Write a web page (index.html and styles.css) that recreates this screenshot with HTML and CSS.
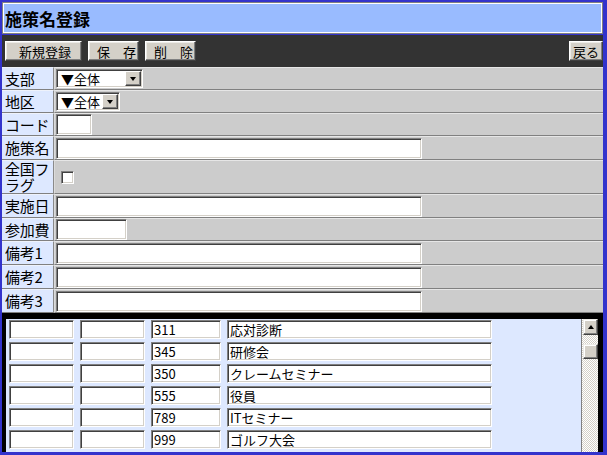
FILE: index.html
```html
<!DOCTYPE html>
<html lang="ja">
<head>
<meta charset="utf-8">
<title>施策名登録</title>
<link rel="stylesheet" href="styles.css">
</head>
<body>
<div class="page">
  <div class="title">施策名登録</div>
  <div class="toolbar">
    <button class="btn b-new">新規登録</button>
    <button class="btn b-save">保　存</button>
    <button class="btn b-del">削　除</button>
    <button class="btn b-back">戻る</button>
  </div>
  <div class="form">
    <div class="row sm">
      <div class="lbl">支部</div>
      <div class="val"><div class="ctl sel sel-wide"><span class="sel-text">▼全体</span><span class="sel-btn"><span class="tri-down"></span></span></div></div>
    </div>
    <div class="row sm">
      <div class="lbl">地区</div>
      <div class="val"><div class="ctl sel sel-narrow"><span class="sel-text">▼全体</span><span class="sel-btn"><span class="tri-down"></span></span></div></div>
    </div>
    <div class="row sm">
      <div class="lbl">コード</div>
      <div class="val"><input class="ctl txt w-code" type="text"></div>
    </div>
    <div class="row">
      <div class="lbl">施策名</div>
      <div class="val"><input class="ctl txt w-full" type="text"></div>
    </div>
    <div class="row tall">
      <div class="lbl">全国フラグ</div>
      <div class="val"><input class="ctl chk" type="checkbox"></div>
    </div>
    <div class="row">
      <div class="lbl">実施日</div>
      <div class="val"><input class="ctl txt w-full" type="text"></div>
    </div>
    <div class="row sm">
      <div class="lbl">参加費</div>
      <div class="val"><input class="ctl txt w-fee" type="text"></div>
    </div>
    <div class="row">
      <div class="lbl">備考1</div>
      <div class="val"><input class="ctl txt w-full" type="text"></div>
    </div>
    <div class="row">
      <div class="lbl">備考2</div>
      <div class="val"><input class="ctl txt w-full" type="text"></div>
    </div>
    <div class="row">
      <div class="lbl">備考3</div>
      <div class="val"><input class="ctl txt w-full" type="text"></div>
    </div>
  </div>
  <div class="list">
    <div class="list-body">
      <div class="lrow"><input class="ctl lc1" type="text"><input class="ctl lc2" type="text"><input class="ctl lc3" type="text" value="311"><input class="ctl lc4" type="text" value="応対診断"></div>
      <div class="lrow"><input class="ctl lc1" type="text"><input class="ctl lc2" type="text"><input class="ctl lc3" type="text" value="345"><input class="ctl lc4" type="text" value="研修会"></div>
      <div class="lrow"><input class="ctl lc1" type="text"><input class="ctl lc2" type="text"><input class="ctl lc3" type="text" value="350"><input class="ctl lc4" type="text" value="クレームセミナー"></div>
      <div class="lrow"><input class="ctl lc1" type="text"><input class="ctl lc2" type="text"><input class="ctl lc3" type="text" value="555"><input class="ctl lc4" type="text" value="役員"></div>
      <div class="lrow"><input class="ctl lc1" type="text"><input class="ctl lc2" type="text"><input class="ctl lc3" type="text" value="789"><input class="ctl lc4" type="text" value="ITセミナー"></div>
      <div class="lrow"><input class="ctl lc1" type="text"><input class="ctl lc2" type="text"><input class="ctl lc3" type="text" value="999"><input class="ctl lc4" type="text" value="ゴルフ大会"></div>
    </div>
    <div class="sb">
      <div class="sb-btn"><span class="tri-up"></span></div>
      <div class="sb-thumb"></div>
    </div>
  </div>
</div>
</body>
</html>
```

FILE: styles.css
```css
* { box-sizing: border-box; }

body {
  margin: 0;
  font-family: "Noto Sans CJK JP", "Liberation Sans", sans-serif;
  color: #000;
}

.page {
  width: 607px;
  height: 455px;
  background: #3333cc;
  padding: 2px 4px 3px 2px;
  display: flex;
  flex-direction: column;
  overflow: hidden;
}

.title {
  height: 32px;
  flex: none;
  background: #99bbff;
  border: 1px solid #808080;
  box-shadow: inset 0 0 0 1px #fff;
  font-size: 17px;
  font-weight: bold;
  padding-left: 2px;
  display: flex;
  align-items: center;
  margin-bottom: 1px;
}

.toolbar {
  height: 32px;
  flex: none;
  background: #333333;
  display: flex;
  align-items: flex-start;
  gap: 6px;
  padding: 6px 0 0 3px;
}

.btn {
  height: 20px;
  font-family: "Noto Sans CJK JP", sans-serif;
  font-size: 13px;
  line-height: 17px;
  color: #000;
  background: #d4d0c8;
  border: 1px solid;
  border-color: #fff #404040 #404040 #fff;
  box-shadow: inset -1px -1px 0 #808080, inset 1px 1px 0 #ecebe7;
  padding: 0;
  text-align: left;
  white-space: nowrap;
}
.b-new { width: 77px; padding-left: 13px; }
.b-save { width: 51px; padding-left: 8px; }
.b-del { width: 51px; padding-left: 8px; }
.b-back { width: 34px; margin-left: auto; text-align: center; }

.form {
  display: flex;
  flex-direction: column;
  flex: none;
}

.row {
  display: flex;
  height: 24px;
}
.row.sm { height: 23px; }
.row.tall { height: 34px; }

.lbl {
  width: 52px;
  flex: none;
  background: #dde8ff;
  border-top: 1px solid #eef2fb;
  border-bottom: 1px solid #808080;
  border-right: 1px solid #8a8a8a;
  font-size: 15px;
  line-height: 16px;
  padding-left: 3px;
  display: flex;
  align-items: center;
  letter-spacing: -0.3px;
}

.val {
  flex: 1;
  background: #cccccc;
  border-top: 1px solid #e6e6e6;
  border-bottom: 1px solid #808080;
  border-left: 1px solid #dcdcdc;
  display: flex;
  align-items: center;
  padding-left: 1px;
}

.ctl {
  background: #fff;
  border: 1px solid;
  border-color: #808080 #fff #fff #808080;
  box-shadow: inset 1px 1px 0 #404040, inset -1px -1px 0 #d4d0c8;
  font-family: "Noto Sans CJK JP", sans-serif;
  font-size: 13px;
  color: #000;
  padding: 0 2px;
  margin: 0;
  outline: none;
}

.txt { height: 21px; }
.w-full { width: 366px; }
.w-code { width: 36px; }
.w-fee { width: 71px; }

.sel {
  height: 19px;
  display: flex;
  align-items: center;
  padding: 0 1px 0 0;
}
.sel-wide { width: 87px; }
.sel-narrow { width: 64px; }
.sel-text {
  flex: 1;
  font-size: 13px;
  line-height: 15px;
  padding-left: 4px;
  white-space: nowrap;
}
.sel-btn {
  width: 16px;
  height: 15px;
  flex: none;
  background: #d4d0c8;
  border: 1px solid;
  border-color: #fff #404040 #404040 #fff;
  box-shadow: inset -1px -1px 0 #808080;
  display: flex;
  align-items: center;
  justify-content: center;
}
.tri-down {
  width: 0;
  height: 0;
  border-left: 3.5px solid transparent;
  border-right: 3.5px solid transparent;
  border-top: 4px solid #000;
}

.chk {
  appearance: none;
  -webkit-appearance: none;
  width: 13px;
  height: 13px;
  margin-left: 5px;
  padding: 0;
}

.list {
  flex: 1;
  display: flex;
  background: #dde8ff;
  border-style: solid;
  border-color: #000;
  border-width: 6px 5px 0 4px;
  min-height: 0;
}

.list-body {
  flex: 1;
  display: flex;
  flex-direction: column;
  gap: 3px;
  padding: 1px 0 0 3px;
}

.lrow {
  display: flex;
  gap: 6px;
}
.lrow .ctl { height: 19px; }
.lc1 { width: 65px; }
.lc2 { width: 65px; }
.lc3 { width: 70px; }
.lc4 { width: 265px; }

.sb {
  width: 17px;
  flex: none;
  border-left: 1px solid #808080;
  padding-left: 1px;
  background: repeating-conic-gradient(#d4d0c8 0 25%, #ffffff 0 50%) 0 0 / 2px 2px;
  display: flex;
  flex-direction: column;
}
.sb-btn, .sb-thumb {
  width: 15px;
  background: #d4d0c8;
  border: 1px solid;
  border-color: #ecebe7 #404040 #404040 #ecebe7;
  box-shadow: inset -1px -1px 0 #808080, inset 1px 1px 0 #fff;
}
.sb-btn {
  height: 16px;
  display: flex;
  align-items: center;
  justify-content: center;
}
.sb-thumb {
  height: 15px;
  margin-top: 9px;
}
.tri-up {
  width: 0;
  height: 0;
  border-left: 3.5px solid transparent;
  border-right: 3.5px solid transparent;
  border-bottom: 4px solid #000;
}
```
